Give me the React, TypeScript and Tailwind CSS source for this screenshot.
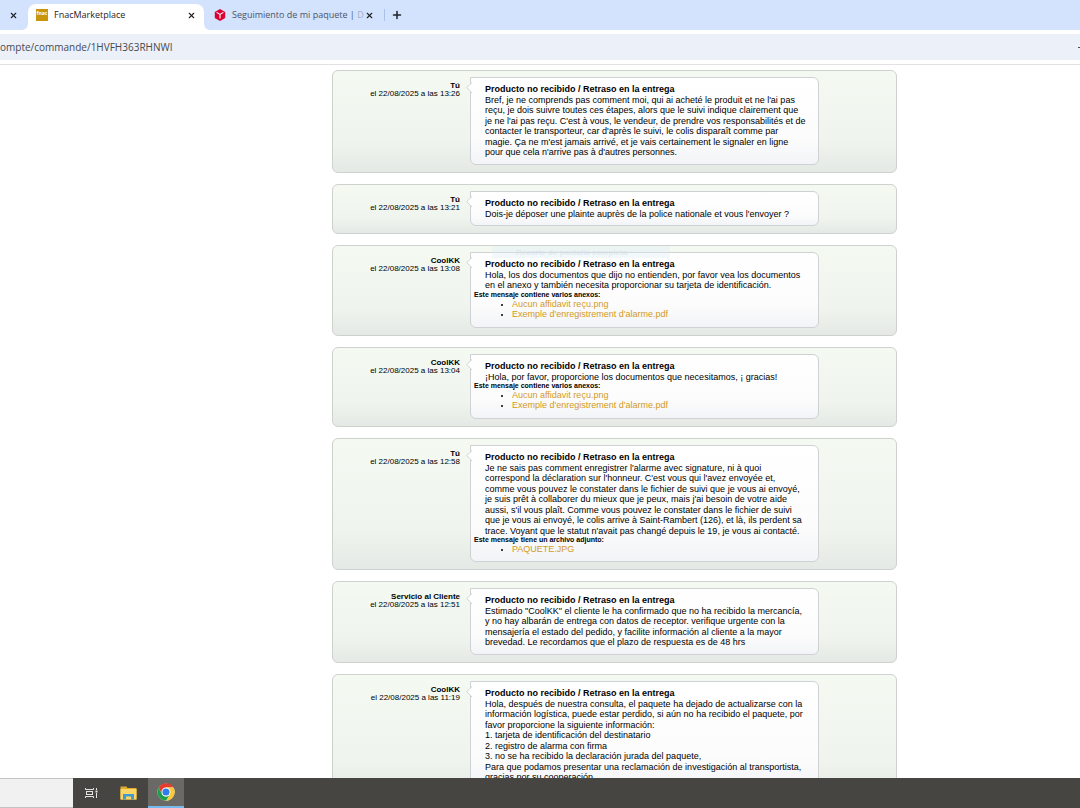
import { Plus, X } from "lucide-react";

type Message = {
  author: string;
  date: string;
  lines: string[];
  note?: string;
  files?: string[];
  hint?: boolean;
};

const subject = "Producto no recibido / Retraso en la entrega";

const messages: Message[] = [
  {
    author: "Tú",
    date: "el 22/08/2025 a las 13:26",
    lines: [
      "Bref, je ne comprends pas comment moi, qui ai acheté le produit et ne l'ai pas",
      "reçu, je dois suivre toutes ces étapes, alors que le suivi indique clairement que",
      "je ne l'ai pas reçu. C'est à vous, le vendeur, de prendre vos responsabilités et de",
      "contacter le transporteur, car d'après le suivi, le colis disparaît comme par",
      "magie. Ça ne m'est jamais arrivé, et je vais certainement le signaler en ligne",
      "pour que cela n'arrive pas à d'autres personnes.",
    ],
  },
  {
    author: "Tú",
    date: "el 22/08/2025 a las 13:21",
    lines: ["Dois-je déposer une plainte auprès de la police nationale et vous l'envoyer ?"],
  },
  {
    author: "CoolKK",
    date: "el 22/08/2025 a las 13:08",
    hint: true,
    lines: [
      "Hola, los dos documentos que dijo no entienden, por favor vea los documentos",
      "en el anexo y también necesita proporcionar su tarjeta de identificación.",
    ],
    note: "Este mensaje contiene varios anexos:",
    files: ["Aucun affidavit reçu.png", "Exemple d'enregistrement d'alarme.pdf"],
  },
  {
    author: "CoolKK",
    date: "el 22/08/2025 a las 13:04",
    lines: ["¡Hola, por favor, proporcione los documentos que necesitamos, ¡ gracias!"],
    note: "Este mensaje contiene varios anexos:",
    files: ["Aucun affidavit reçu.png", "Exemple d'enregistrement d'alarme.pdf"],
  },
  {
    author: "Tú",
    date: "el 22/08/2025 a las 12:58",
    lines: [
      "Je ne sais pas comment enregistrer l'alarme avec signature, ni à quoi",
      "correspond la déclaration sur l'honneur. C'est vous qui l'avez envoyée et,",
      "comme vous pouvez le constater dans le fichier de suivi que je vous ai envoyé,",
      "je suis prêt à collaborer du mieux que je peux, mais j'ai besoin de votre aide",
      "aussi, s'il vous plaît. Comme vous pouvez le constater dans le fichier de suivi",
      "que je vous ai envoyé, le colis arrive à Saint-Rambert (126), et là, ils perdent sa",
      "trace. Voyant que le statut n'avait pas changé depuis le 19, je vous ai contacté.",
    ],
    note: "Este mensaje tiene un archivo adjunto:",
    files: ["PAQUETE.JPG"],
  },
  {
    author: "Servicio al Cliente",
    date: "el 22/08/2025 a las 12:51",
    lines: [
      'Estimado "CoolKK" el cliente le ha confirmado que no ha recibido la mercancía,',
      "y no hay albarán de entrega con datos de receptor. verifique urgente con la",
      "mensajería el estado del pedido, y facilite información al cliente a la mayor",
      "brevedad. Le recordamos que el plazo de respuesta es de 48 hrs",
    ],
  },
  {
    author: "CoolKK",
    date: "el 22/08/2025 a las 11:19",
    lines: [
      "Hola, después de nuestra consulta, el paquete ha dejado de actualizarse con la",
      "información logística, puede estar perdido, si aún no ha recibido el paquete, por",
      "favor proporcione la siguiente información:",
      "1. tarjeta de identificación del destinatario",
      "2. registro de alarma con firma",
      "3. no se ha recibido la declaración jurada del paquete,",
      "Para que podamos presentar una reclamación de investigación al transportista,",
      "gracias por su cooperación",
    ],
  },
];

function MessageCard({ message }: { message: Message }) {
  return (
    <article className="relative flex rounded-md border border-[#cfd1cf] bg-linear-to-b from-[#f4faf2] via-[#eff4ee] via-70% to-[#e5e9e5] pt-[6px] pr-[77px] pb-[7px]">
      <div className="w-[127px] shrink-0 pt-[5px] text-right text-[8px] leading-[8px]">
        <p className="font-bold">{message.author}</p>
        <p>{message.date}</p>
      </div>

      <div className="relative ml-[10px] min-w-0 flex-1 rounded-md rounded-tl-none border border-[#cfd2d4] bg-linear-to-b from-white via-[#fcfcfc] via-70% to-[#f3f4f7] pt-[6px] pb-[6px]">
        {/* Speech pointer */}
        <svg className="absolute top-1 -left-[5px]" width="6" height="12" viewBox="0 0 6 12">
          <path d="M6 0.5L0.8 5.5L6 11" fill="#fff" stroke="#cfd2d4" />
        </svg>
        {message.hint && (
          <div className="absolute -top-[7px] left-[21px] h-3 w-[178px] overflow-hidden bg-[#dcebf5]/35 pl-6 text-[8px] leading-[14px] font-bold text-[#cfdbe3]/50">
            Recorte de pantalla completa
          </div>
        )}
        <div className="relative pl-[14px] text-[9px] whitespace-nowrap">
          <h2 className="leading-[11px] font-bold">{subject}</h2>
          <p>
            {message.lines.map((line) => (
              <span key={line} className="block odd:leading-[10px] even:leading-[11px]">
                {line}
              </span>
            ))}
          </p>
        </div>
        {message.note && <p className="pl-[3px] text-[7px] leading-[8px] font-bold">{message.note}</p>}
        {message.files && (
          <ul className="list-disc pb-px pl-[41px] text-[9px] marker:text-[7px]">
            {message.files.map((file) => (
              <li key={file} className="odd:leading-[10px] even:leading-[11px]">
                <a href="#" className="text-[#d39a1c]">
                  {file}
                </a>
              </li>
            ))}
          </ul>
        )}
      </div>
    </article>
  );
}

function TabStrip() {
  return (
    <div className="flex h-[30px] items-end bg-[#d3e2fd] text-[9px] text-[#1f2328]">
      <div className="flex h-[26px] w-7 items-center justify-end pr-2.5 pb-1">
        <button aria-label="Cerrar">
          <X size={9} strokeWidth={3} />
        </button>
      </div>
      <div className="relative flex h-[26px] w-[176px] items-center rounded-t-lg bg-white px-2 pb-1">
        {/* Flared feet of the active tab */}
        <svg className="absolute bottom-0 -left-1.5" width="6" height="6" viewBox="0 0 6 6">
          <path d="M6 0V6H0A6 6 0 0 0 6 0Z" fill="#fff" />
        </svg>
        <svg className="absolute -right-1.5 bottom-0" width="6" height="6" viewBox="0 0 6 6">
          <path d="M0 0V6H6A6 6 0 0 1 0 0Z" fill="#fff" />
        </svg>
        <span className="flex size-3 justify-center overflow-hidden bg-[#c8960c] text-[5px] leading-[8px] font-bold text-white">
          fnac
        </span>
        <span className="ml-1.5 flex-1">FnacMarketplace</span>
        <button aria-label="Cerrar pestaña">
          <X size={9} strokeWidth={3} />
        </button>
      </div>
      <div className="flex h-[26px] w-[180px] items-center pr-2.5 pb-1 pl-2.5">
        <svg width="12" height="12" viewBox="0 0 12 12">
          <path d="M6 0L11.2 3V9L6 12L0.8 9V3Z" fill="#dc0032" />
          <path d="M2.6 3.4L6 5.4L9.4 3.4M6 5.4V9.4" fill="none" stroke="#fff" strokeWidth="1.1" />
        </svg>
        <span className="ml-1.5 flex-1 whitespace-nowrap text-[#4a5568]">
          Seguimiento de mi paquete | <span className="text-[#9fb0cc]">D</span>
        </span>
        <button aria-label="Cerrar pestaña">
          <X size={9} strokeWidth={3} />
        </button>
      </div>
      <div className="flex h-[26px] items-center pb-1">
        <span className="h-3 w-px bg-[#a9c2ee]" />
        <button aria-label="Nueva pestaña" className="ml-1.5">
          <Plus size={12} strokeWidth={3} />
        </button>
      </div>
    </div>
  );
}

function Taskbar() {
  return (
    <footer className="flex h-[30px] shrink-0 bg-[#464542]">
      <div className="w-[73px] border-y border-[#c4c4c4] bg-[#f1f1f1]" />
      <button aria-label="Vista de tareas" className="flex w-9 items-center justify-center">
        <svg width="13" height="12" viewBox="0 0 13 12" fill="none" stroke="#e4e4e4">
          <path d="M0.5 1V2.5H8.5V1M0.5 11V9.5H8.5V11M1.5 4V8M7.5 4V8M1.5 4.5H7.5M1.5 7.5H7.5M11.5 1V3M11.5 6V11" />
          <path d="M10.5 4.5H12.5" strokeWidth="2" />
        </svg>
      </button>
      <button aria-label="Explorador de archivos" className="flex w-[39px] items-center justify-center">
        <svg width="17" height="14" viewBox="0 0 17 14">
          <path d="M0.5 0.5H6.5L7.5 2H16.5V13.5H0.5Z" fill="#e0aa2c" />
          <path d="M0.5 3H16.5V13.5H0.5Z" fill="#fbd667" />
          <path d="M3 13.5V8H14V13.5H11V10.5H6V13.5Z" fill="#3f9bd1" />
        </svg>
      </button>
      <button
        aria-label="Google Chrome"
        className="flex w-9 items-center justify-center border-b-2 border-[#76b9ed] bg-[#6a6966]"
      >
        <svg width="18" height="18" viewBox="0 0 48 48">
          <circle cx="24" cy="24" r="23" fill="#fff" />
          <path d="M24 12H44A23 23 0 0 0 4.1 12.5L13.6 30Z" fill="#e33b2e" />
          <path d="M34.4 30L24.4 47A23 23 0 0 0 44 12.5L43.9 12H24Z" fill="#fcc934" />
          <path d="M13.6 30L4.1 12.5A23 23 0 0 0 24 47L34.4 30A12 12 0 0 1 13.6 30Z" fill="#1e9e4b" />
          <circle cx="24" cy="24" r="12" fill="#fff" />
          <circle cx="24" cy="24" r="9.5" fill="#2f7de9" />
        </svg>
      </button>
    </footer>
  );
}

export default function App() {
  return (
    <div className="flex h-screen flex-col overflow-hidden bg-white font-['Liberation_Sans',Arial,sans-serif] text-black">
      <header className="shrink-0 border-b border-[#e2e2e4] font-['Open_Sans','Noto_Sans',sans-serif]">
        <TabStrip />
        <div className="flex py-1">
          <div className="flex h-[26px] flex-1 items-center justify-between overflow-hidden bg-[#ebf0f9] text-[10px] text-[#474a4f]">
            <span>ompte/commande/1HVFH363RHNWI</span>
            <span className="h-px w-0.5 bg-[#474a4f]" />
          </div>
        </div>
      </header>

      <main className="min-h-0 flex-1 overflow-hidden pt-[5px] pl-[332px]">
        <div className="flex max-w-[565px] flex-col gap-[11px]">
          {messages.map((message) => (
            <MessageCard key={message.date} message={message} />
          ))}
        </div>
      </main>

      <Taskbar />
    </div>
  );
}
